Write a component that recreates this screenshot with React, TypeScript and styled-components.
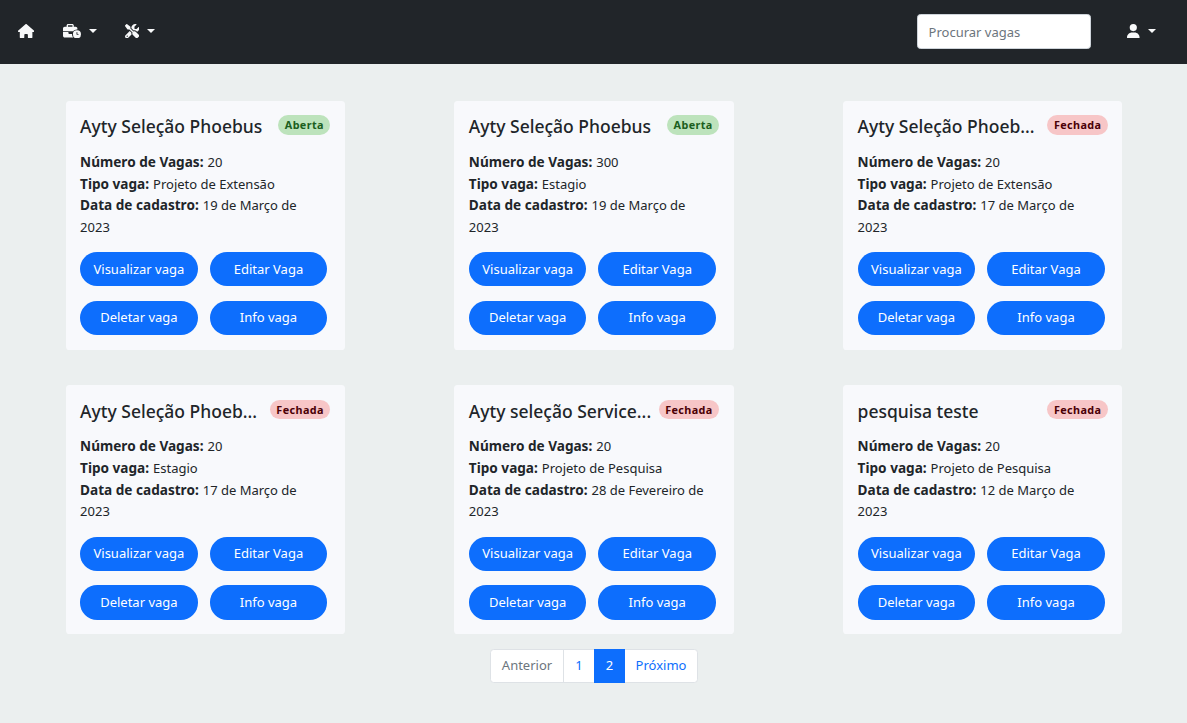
import React from "react";
import styled, { createGlobalStyle } from "styled-components";
import { FaHouse, FaBusinessTime, FaScrewdriverWrench, FaUser } from "react-icons/fa6";

const GlobalStyle = createGlobalStyle`
  *, *::before, *::after { box-sizing: border-box; }
  body {
    margin: 0;
    min-height: 100vh;
    background: #ebefef;
    color: #212529;
    font-family: "Noto Sans", "Open Sans", sans-serif;
    font-size: 13px;
    line-height: 21.6px;
  }
`;

const Navbar = styled.nav`
  display: flex;
  align-items: center;
  height: 64px;
  padding: 0 31px 2px 18px;
  background: #212529;
  color: #f8f9fa;
`;

const NavItem = styled.a<{ $gap?: number; $icon: number }>`
  display: flex;
  align-items: center;
  margin-right: ${({ $gap = 0 }) => $gap}px;
  color: inherit;
  svg {
    width: ${({ $icon }) => $icon}px;
    height: 14.4px;
  }
`;

const Caret = styled.span`
  margin-left: 8px;
  border-top: 4.3px solid currentColor;
  border-left: 4.3px solid transparent;
  border-right: 4.3px solid transparent;
`;

const Search = styled.input`
  width: 174px;
  height: 35px;
  margin: 1px 36.4px 0 auto;
  padding: 1px 10.6px 0;
  border: 1px solid #ced4da;
  border-radius: 3.5px;
  background: #fff;
  font: inherit;
  &::placeholder { color: #6c757d; opacity: 1; }
`;

const Grid = styled.main`
  display: grid;
  grid-template-columns: repeat(3, 279.2px);
  grid-auto-rows: 249px;
  justify-content: space-between;
  row-gap: 35.4px;
  padding: 36.8px 64.6px 0 65.7px;
`;

const Card = styled.article`
  padding: 14.4px 14.4px 0;
  border-radius: 3.6px;
  background: #f8f9fc;
`;

const CardHeader = styled.header`
  display: flex;
  justify-content: space-between;
  align-items: flex-start;
  height: 36.8px;
`;

const Title = styled.h5`
  margin: 0;
  font-size: 17.5px;
  font-weight: 500;
  line-height: 22.4px;
  white-space: nowrap;
`;

const Badge = styled.span<{ $open: boolean }>`
  flex: none;
  height: 19.6px;
  padding: 0 6.6px;
  border-radius: 10px;
  background: ${({ $open }) => ($open ? "#bde3bc" : "#f7c6c7")};
  color: ${({ $open }) => ($open ? "#1b5e20" : "#4a0006")};
  font-size: 10.8px;
  font-weight: 700;
  letter-spacing: 0.4px;
  line-height: 19.6px;
`;

const Details = styled.div`
  height: 86.4px;
  margin-bottom: 13.8px;
  padding-right: 10px;
`;

const Detail = styled.p`
  margin: 0;
`;

const Label = styled.b`
  margin-right: 0.6px;
  font-size: 13.6px;
  line-height: 1;
`;

const Actions = styled.div`
  display: grid;
  grid-template-columns: 117.6px 117.6px;
  gap: 14.4px 12px;
`;

const Button = styled.button`
  height: 34.3px;
  padding: 0;
  border: 0;
  border-radius: 17.2px;
  background: #0d6efd;
  color: #fff;
  font: inherit;
`;

const Pagination = styled.nav`
  display: flex;
  justify-content: center;
  padding: 14.4px 0 0 1px;
`;

const PageLink = styled.a<{ $width: number; $state?: "active" | "disabled" }>`
  display: flex;
  align-items: center;
  justify-content: center;
  width: ${({ $width }) => $width}px;
  height: 34.4px;
  margin-left: -1px;
  padding-top: 1px;
  border: 1px solid ${({ $state }) => ($state === "active" ? "#0d6efd" : "#dee2e6")};
  background: ${({ $state }) => ($state === "active" ? "#0d6efd" : "#fff")};
  color: ${({ $state }) => ($state === "active" ? "#fff" : $state === "disabled" ? "#6c757d" : "#0d6efd")};
  z-index: ${({ $state }) => ($state === "active" ? 1 : 0)};
  &:first-child { margin-left: 0; border-radius: 3.6px 0 0 3.6px; }
  &:last-child { border-radius: 0 3.6px 3.6px 0; }
`;

const jobs = [
  { title: "Ayty Seleção Phoebus", open: true, total: 20, kind: "Projeto de Extensão", date: "19 de Março de 2023" },
  { title: "Ayty Seleção Phoebus", open: true, total: 300, kind: "Estagio", date: "19 de Março de 2023" },
  { title: "Ayty Seleção Phoeb...", open: false, total: 20, kind: "Projeto de Extensão", date: "17 de Março de 2023" },
  { title: "Ayty Seleção Phoeb...", open: false, total: 20, kind: "Estagio", date: "17 de Março de 2023" },
  { title: "Ayty seleção Service...", open: false, total: 20, kind: "Projeto de Pesquisa", date: "28 de Fevereiro de 2023" },
  { title: "pesquisa teste", open: false, total: 20, kind: "Projeto de Pesquisa", date: "12 de Março de 2023" },
];

export default function App() {
  return (
    <>
      <GlobalStyle />
      <Navbar>
        <NavItem $icon={16.2} $gap={28.8}><FaHouse /></NavItem>
        <NavItem $icon={18} $gap={28}><FaBusinessTime /><Caret /></NavItem>
        <NavItem $icon={14.4}><FaScrewdriverWrench /><Caret /></NavItem>
        <Search placeholder="Procurar vagas" />
        <NavItem $icon={12.6}><FaUser /><Caret /></NavItem>
      </Navbar>
      <Grid>
        {jobs.map((job, i) => (
          <Card key={i}>
            <CardHeader>
              <Title>{job.title}</Title>
              <Badge $open={job.open}>{job.open ? "Aberta" : "Fechada"}</Badge>
            </CardHeader>
            <Details>
              <Detail><Label>Número de Vagas:</Label> {job.total}</Detail>
              <Detail><Label>Tipo vaga:</Label> {job.kind}</Detail>
              <Detail><Label>Data de cadastro:</Label> {job.date}</Detail>
            </Details>
            <Actions>
              <Button>Visualizar vaga</Button>
              <Button>Editar Vaga</Button>
              <Button>Deletar vaga</Button>
              <Button>Info vaga</Button>
            </Actions>
          </Card>
        ))}
      </Grid>
      <Pagination>
        <PageLink $width={74} $state="disabled">Anterior</PageLink>
        <PageLink $width={32}>1</PageLink>
        <PageLink $width={31} $state="active">2</PageLink>
        <PageLink $width={74}>Próximo</PageLink>
      </Pagination>
    </>
  );
}
